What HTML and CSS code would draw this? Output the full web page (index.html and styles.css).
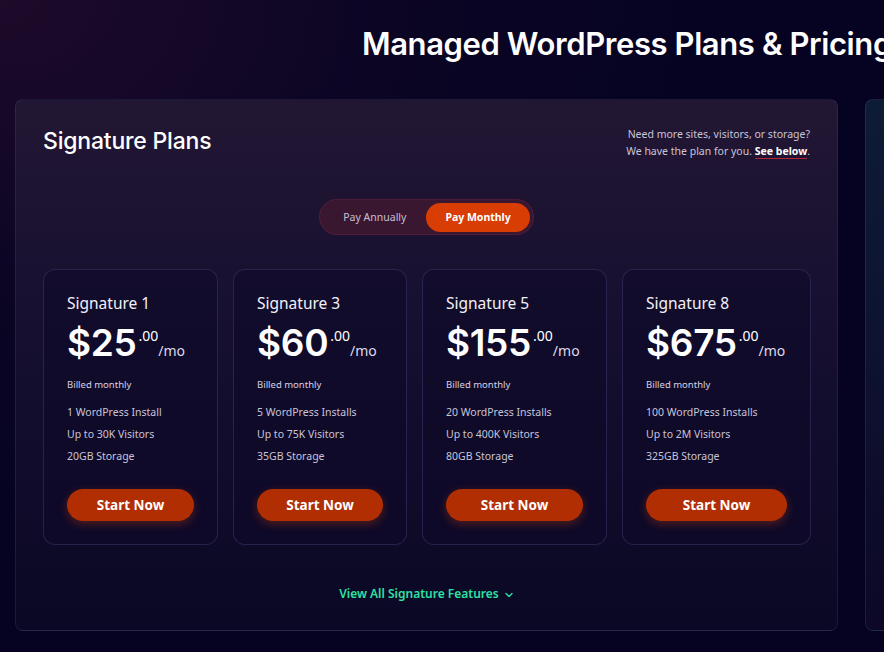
FILE: index.html
```html
<!DOCTYPE html>
<html>
<head>
<meta charset="utf-8">
<link rel="stylesheet" href="styles.css">
</head>
<body>
<div class="page">
  <h1 class="title">Managed WordPress Plans &amp; Pricing</h1>
  <div class="panels">
    <section class="panel">
      <div class="panel-head">
        <h2 class="panel-title">Signature Plans</h2>
        <p class="panel-note">Need more sites, visitors, or storage?<br>We have the plan for you. <a class="see" href="#">See below</a>.</p>
      </div>
      <div class="toggle-wrap">
        <div class="toggle">
          <span class="opt">Pay Annually</span>
          <span class="opt active">Pay Monthly</span>
        </div>
      </div>
      <div class="cards">
        <div class="card">
          <div class="name">Signature 1</div>
          <div class="price"><span class="amt">$25</span><span class="cents">.00</span><span class="per">/mo</span></div>
          <div class="billed">Billed monthly</div>
          <ul class="feats"><li>1 WordPress Install</li><li>Up to 30K Visitors</li><li>20GB Storage</li></ul>
          <a class="btn" href="#">Start Now</a>
        </div>
        <div class="card">
          <div class="name">Signature 3</div>
          <div class="price"><span class="amt">$60</span><span class="cents">.00</span><span class="per">/mo</span></div>
          <div class="billed">Billed monthly</div>
          <ul class="feats"><li>5 WordPress Installs</li><li>Up to 75K Visitors</li><li>35GB Storage</li></ul>
          <a class="btn" href="#">Start Now</a>
        </div>
        <div class="card">
          <div class="name">Signature 5</div>
          <div class="price"><span class="amt">$155</span><span class="cents">.00</span><span class="per">/mo</span></div>
          <div class="billed">Billed monthly</div>
          <ul class="feats"><li>20 WordPress Installs</li><li>Up to 400K Visitors</li><li>80GB Storage</li></ul>
          <a class="btn" href="#">Start Now</a>
        </div>
        <div class="card">
          <div class="name">Signature 8</div>
          <div class="price"><span class="amt">$675</span><span class="cents">.00</span><span class="per">/mo</span></div>
          <div class="billed">Billed monthly</div>
          <ul class="feats"><li>100 WordPress Installs</li><li>Up to 2M Visitors</li><li>325GB Storage</li></ul>
          <a class="btn" href="#">Start Now</a>
        </div>
      </div>
      <div class="more">
        <a class="more-link" href="#">View All Signature Features
          <svg class="chev" width="10" height="10" viewBox="0 0 10 10"><path d="M2 3.5 L5 6.5 L8 3.5" fill="none" stroke="currentColor" stroke-width="1.4" stroke-linecap="round" stroke-linejoin="round"/></svg>
        </a>
      </div>
    </section>
    <section class="panel panel-next"></section>
  </div>
</div>
</body>
</html>
```
FILE: styles.css
```css
html, body {
  margin: 0;
  padding: 0;
  width: 884px;
  height: 652px;
  overflow: hidden;
}
body {
  background: radial-gradient(ellipse 700px 500px at 0% 0%, #1e0a2a 0%, #0c0524 55%, #060322 100%), #060322;
  font-family: "Noto Sans", "Open Sans", sans-serif;
  color: #fff;
}
.page {
  width: 1300px;
  height: 652px;
}
.title {
  margin: 0;
  padding: 26px 0 0 362px;
  height: 99px;
  box-sizing: border-box;
  font-family: Inter, "Noto Sans", sans-serif;
  font-size: 31px;
  font-weight: 600;
  letter-spacing: -0.4px;
  line-height: 36px;
  white-space: nowrap;
}
.panels {
  display: flex;
  gap: 27px;
  padding-left: 15px;
}
.panel {
  width: 823px;
  height: 532px;
  box-sizing: border-box;
  flex-shrink: 0;
  border-radius: 8px;
  border: 1px solid rgba(120, 110, 170, 0.16);
  background: linear-gradient(180deg, #221733 0%, #160f30 45%, #0a0824 100%);
  padding: 0 27px;
}
.panel-next {
  width: 300px;
  background: linear-gradient(180deg, #0d1c36 0%, #0d1230 50%, #0c0826 100%);
  border-color: rgba(90, 130, 170, 0.18);
}
.panel-head {
  display: flex;
  justify-content: space-between;
  align-items: flex-start;
  padding-top: 26px;
  height: 73px;
  box-sizing: border-box;
}
.panel-title {
  margin: 0;
  font-family: Inter, "Noto Sans", sans-serif;
  font-size: 23px;
  font-weight: 500;
  line-height: 30px;
  letter-spacing: -0.2px;
}
.panel-note {
  margin: 0;
  text-align: right;
  font-size: 10.5px;
  line-height: 17px;
  color: #c9c4d8;
}
.see {
  color: #fff;
  font-weight: 700;
  text-decoration: none;
  border-bottom: 1px solid #b3263a;
}
.toggle-wrap {
  display: flex;
  justify-content: center;
  align-items: flex-start;
  height: 96px;
  padding-top: 26px;
  box-sizing: border-box;
}
.toggle {
  display: flex;
  align-items: center;
  height: 36px;
  box-sizing: border-box;
  padding: 3px;
  border-radius: 18px;
  background: #3a1730;
  border: 1px solid rgba(90, 30, 60, 0.7);
}
.opt {
  display: flex;
  align-items: center;
  justify-content: center;
  height: 29px;
  font-size: 10.5px;
  color: #c7bfd0;
  padding: 0 20px;
}
.opt.active {
  background: #d83d03;
  color: #fff;
  font-weight: 700;
  border-radius: 15px;
  padding: 0 19px;
}
.cards {
  display: grid;
  grid-template-columns: 175px 174px 185px 189px;
  gap: 15px;
}
.card {
  height: 276px;
  box-sizing: border-box;
  border-radius: 12px;
  border: 1px solid rgba(80, 80, 140, 0.35);
  background: rgba(14, 10, 40, 0.55);
  padding: 23px 23px 0 23px;
  display: flex;
  flex-direction: column;
}
.name {
  font-size: 15.5px;
  line-height: 20px;
  color: #f2f0f8;
}
.price {
  display: flex;
  align-items: flex-start;
  margin-top: 8px;
  height: 44px;
}
.amt {
  font-family: Inter, "Noto Sans", sans-serif;
  font-size: 37px;
  font-weight: 600;
  line-height: 44px;
  letter-spacing: -0.3px;
}
.cents {
  font-size: 14px;
  line-height: 16px;
  margin-top: 7px;
  margin-left: 2px;
}
.per {
  font-size: 14px;
  line-height: 16px;
  margin-top: 22px;
  color: #ddd9e8;
}
.billed {
  margin-top: 14px;
  font-size: 9.5px;
  line-height: 12px;
  color: #d6d2e2;
}
.feats {
  list-style: none;
  margin: 10px 0 0 0;
  padding: 0;
  font-size: 10.5px;
  line-height: 22px;
  color: #c8c4d8;
}
.btn {
  margin-top: 22px;
  height: 32px;
  border-radius: 16px;
  background: #b02e02;
  box-shadow: 0 3px 10px rgba(216, 70, 10, 0.35);
  color: #fff;
  font-weight: 700;
  font-size: 13.5px;
  display: flex;
  align-items: center;
  justify-content: center;
  text-decoration: none;
}
.more {
  display: flex;
  justify-content: center;
  margin-top: 40px;
}
.more-link {
  color: #2fe0a6;
  font-size: 12px;
  font-weight: 600;
  text-decoration: none;
  display: flex;
  align-items: center;
  gap: 5px;
}
.chev {
  margin-top: 2px;
}
```
